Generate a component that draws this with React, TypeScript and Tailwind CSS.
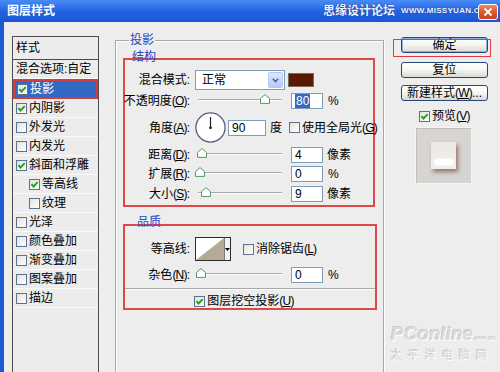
import React from 'react';

// XP 스타일 체크박스
const Check = ({ on = false }: { on?: boolean }) => (
   <span className="flex h-[11px] w-[11px] shrink-0 items-center justify-center border border-[#5d7290] bg-gradient-to-br from-[#e2e2dc] to-white">
      {on && (
         <svg width="9" height="9" viewBox="0 0 9 9">
            <path d="M1.4 4.2 L3.5 6.5 L7.7 2.1" fill="none" stroke="#21a121" strokeWidth="1.9" />
         </svg>
      )}
   </span>
);

const Slider = ({ at }: { at: number }) => (
   <div className="relative ml-[8px] h-[16px] w-[84px] shrink-0">
      <div className="absolute left-0 right-0 top-[6px] h-[2px] border-t border-[#a9a9a9] bg-white" />
      <svg className="absolute top-[1px]" style={{ left: at - 5 }} width="10" height="10" viewBox="0 0 10 10">
         <path d="M0.5 4.5 L5 0.6 L9.5 4.5 L9.5 9.4 L0.5 9.4 Z" fill="#fff" stroke="#4d9a62" />
      </svg>
   </div>
);

const Field = ({ w, children }: { w: string; children: React.ReactNode }) => (
   <div className={`flex h-[16px] shrink-0 items-center border border-[#7f9db9] bg-white pl-[3px] ${w}`}>{children}</div>
);

// 라벨 안의 (O) 같은 단축키 표시
const Key = ({ k }: { k: string }) => (
   <span className="tracking-[-0.8px]">
      (<u>{k}</u>)
   </span>
);

const Label = ({ children }: { children: React.ReactNode }) => (
   <span className="flex w-[65px] shrink-0 justify-end whitespace-nowrap">{children}</span>
);

const Btn = ({ children, main = false }: { children: React.ReactNode; main?: boolean }) => (
   <div
      className={`flex h-[16px] w-[87px] items-center justify-center whitespace-nowrap rounded-[3px] border border-[#24467c] bg-gradient-to-b from-white via-[#f5f5f1] to-[#dadad2] leading-none ${
         main ? 'shadow-[inset_0_0_0_1px_#8fb2e6]' : ''
      }`}
   >
      {children}
   </div>
);

const items: { name: string; on?: boolean; sub?: boolean; sel?: boolean }[] = [
   { name: '投影', on: true, sel: true },
   { name: '内阴影', on: true },
   { name: '外发光' },
   { name: '内发光' },
   { name: '斜面和浮雕', on: true },
   { name: '等高线', on: true, sub: true },
   { name: '纹理', sub: true },
   { name: '光泽' },
   { name: '颜色叠加' },
   { name: '渐变叠加' },
   { name: '图案叠加' },
   { name: '描边' },
];

export default function App() {
   return (
      <div className="relative h-[372px] w-[500px] overflow-hidden bg-[#ededed] font-['Liberation_Sans','Noto_Sans_CJK_SC',sans-serif] text-[12px] leading-[14px] text-black">
         {/* 타이틀바 */}
         <div className="relative flex h-[22px] items-center whitespace-nowrap bg-gradient-to-b from-[#4a8cf4] via-[#2264e2] to-[#1a56d6] pl-[7px]">
            <span className="font-bold text-white">图层样式</span>
            <span className="ml-[268px] font-bold text-[#eef3ff] [text-shadow:0_0_1px_#0b2f94,0_0_1px_#0b2f94]">思缘设计论坛</span>
            <span className="ml-[6px] text-[8px] font-bold tracking-[0.3px] text-[#eef3ff] [text-shadow:0_0_1px_#0b2f94]">WWW.MISSYUAN.COM</span>
            <div className="absolute right-[2px] top-[4px] flex h-[16px] w-[20px] items-center justify-center rounded-[3px] border border-white bg-gradient-to-b from-[#f08a60] via-[#e0552a] to-[#c8401c]">
               <svg width="10" height="10" viewBox="0 0 10 10">
                  <path d="M1.5 1.5 L8.5 8.5 M8.5 1.5 L1.5 8.5" stroke="#fff" strokeWidth="2" />
               </svg>
            </div>
         </div>

         <div className="flex h-[350px] border-l-4 border-[#1d5ad6] pl-[8px] pt-[14px]">
            {/* 스타일 목록 */}
            <div className="h-[340px] w-[87px] shrink-0 whitespace-nowrap border border-[#4f4f4f] bg-[#ececec]">
               <div className="flex h-[23px] items-center border-b border-[#4a4a4a] pl-[3px]">样式</div>
               <div className="flex h-[19px] items-center border-b border-[#fafafa] pl-[3px]">混合选项:自定</div>
               {items.map((it) =>
                  it.sel ? (
                     <div
                        key={it.name}
                        className="flex h-[20px] items-center gap-[2px] border-2 border-[#d23d3d] bg-[#316ac5] pl-[2px] text-white"
                     >
                        <Check on={it.on} />
                        {it.name}
                     </div>
                  ) : (
                     <div
                        key={it.name}
                        className={`flex h-[19px] items-center gap-[2px] border-b border-[#fafafa] ${it.sub ? 'pl-[16px]' : 'pl-[3px]'}`}
                     >
                        <Check on={it.on} />
                        {it.name}
                     </div>
                  )
               )}
            </div>

            {/* 투영 그룹 */}
            <div className="relative ml-[16px] mt-[4px] h-[340px] w-[269px] shrink-0 whitespace-nowrap border border-[#a8a8a8] pl-[7px] pt-[17px] shadow-[inset_1px_1px_0_#fff,1px_1px_0_#fff]">
               <span className="absolute left-[13px] top-[-8px] bg-[#ededed] px-[1px] text-[#1f47c8]">投影</span>

               {/* 구조 */}
               <div className="relative h-[149px] w-[252px] border-2 border-[#e04848] pt-[10px]">
                  <span className="absolute left-[7px] top-[-10px] text-[#1f47c8]">结构</span>

                  <div className="flex h-[20px] items-center">
                     <Label>混合模式:</Label>
                     <div className="ml-[5px] flex h-[20px] w-[90px] items-center border border-[#7f9db9] bg-white pl-[6px]">
                        <span>正常</span>
                        <div className="ml-auto mr-[1px] flex h-[16px] w-[15px] items-center justify-center rounded-[2px] border border-[#b7c8ef] bg-gradient-to-b from-[#dfe8fd] to-[#b6caf6]">
                           <svg width="7" height="5" viewBox="0 0 7 5">
                              <path d="M0.8 0.8 L3.5 3.6 L6.2 0.8" fill="none" stroke="#4d6185" strokeWidth="1.5" />
                           </svg>
                        </div>
                     </div>
                     <div className="ml-[3px] h-[14px] w-[26px] border border-[#7a6a66] bg-[#5a1a02]" />
                  </div>

                  <div className="mt-[3px] flex h-[16px] items-center">
                     <Label>
                        不透明度<Key k="O" />:
                     </Label>
                     <Slider at={67} />
                     <Field w="ml-[9px] w-[32px]">
                        <span className="bg-[#316ac5] px-[1px] text-white">80</span>
                     </Field>
                     <span className="ml-[5px]">%</span>
                  </div>

                  <div className="mt-[3px] flex h-[31px] items-center">
                     <Label>
                        角度<Key k="A" />:
                     </Label>
                     <svg className="ml-[5px] shrink-0" width="31" height="31" viewBox="0 0 31 31">
                        <circle cx="15.5" cy="15.5" r="14.6" fill="#fff" stroke="#55607a" strokeWidth="1.3" />
                        <line x1="15.5" y1="15.5" x2="15.5" y2="5" stroke="#222" strokeWidth="1.2" />
                        <circle cx="15.5" cy="15.8" r="1.4" fill="#222" />
                     </svg>
                     <Field w="ml-[2px] w-[38px]">90</Field>
                     <span className="ml-[4px]">度</span>
                     <span className="ml-[7px]">
                        <Check />
                     </span>
                     <span className="ml-[2px]">
                        使用全局光<Key k="G" />
                     </span>
                  </div>

                  <div className="mt-[4px] flex h-[16px] items-center">
                     <Label>
                        距离<Key k="D" />:
                     </Label>
                     <Slider at={4} />
                     <Field w="ml-[9px] w-[32px]">4</Field>
                     <span className="ml-[4px]">像素</span>
                  </div>

                  <div className="mt-[3px] flex h-[16px] items-center">
                     <Label>
                        扩展<Key k="R" />:
                     </Label>
                     <Slider at={2} />
                     <Field w="ml-[9px] w-[32px]">0</Field>
                     <span className="ml-[5px]">%</span>
                  </div>

                  <div className="mt-[4px] flex h-[16px] items-center">
                     <Label>
                        大小<Key k="S" />:
                     </Label>
                     <Slider at={8} />
                     <Field w="ml-[9px] w-[32px]">9</Field>
                     <span className="ml-[4px]">像素</span>
                  </div>
               </div>

               {/* 품질 */}
               <div className="relative mt-[17px] h-[86px] w-[254px] border-2 border-[#e04848] pt-[11px]">
                  <span className="absolute left-[12px] top-[-11px] text-[#1f47c8]">品质</span>

                  <div className="flex h-[24px] items-center">
                     <Label>等高线:</Label>
                     <div className="ml-[5px] flex h-[24px] w-[36px] shrink-0 border border-[#2c2c2c] bg-white">
                        <svg width="28" height="22" viewBox="0 0 28 22">
                           <polygon points="0,22 28,0 28,22" fill="#b4aa97" />
                        </svg>
                        <div className="flex flex-1 items-center justify-center border-l border-[#7a7a7a] bg-[#f2f2f2]">
                           <svg width="5" height="3" viewBox="0 0 5 3">
                              <polygon points="0,0 5,0 2.5,3" fill="#000" />
                           </svg>
                        </div>
                     </div>
                     <span className="ml-[12px]">
                        <Check />
                     </span>
                     <span className="ml-[2px]">
                        消除锯齿<Key k="L" />
                     </span>
                  </div>

                  <div className="mt-[6px] flex h-[16px] items-center">
                     <Label>
                        杂色<Key k="N" />:
                     </Label>
                     <Slider at={3} />
                     <Field w="ml-[9px] w-[32px]">0</Field>
                     <span className="ml-[5px]">%</span>
                  </div>

                  <div className="mt-[5px] h-[2px] border-t border-[#a9a9a9] bg-white" />

                  <div className="mt-[4px] flex h-[14px] items-center justify-center gap-[2px] pr-[12px]">
                     <Check on />
                     <span>
                        图层挖空投影<Key k="U" />
                     </span>
                  </div>
               </div>
            </div>

            {/* 오른쪽 버튼 */}
            <div className="relative ml-[17px] mt-[1px] w-[87px] shrink-0 whitespace-nowrap">
               <Btn main>确定</Btn>
               <div className="absolute left-[-8px] top-[2px] h-[18px] w-[98px] border border-[#e03c3c]" />
               <div className="mt-[9px]">
                  <Btn>复位</Btn>
               </div>
               <div className="mt-[7px]">
                  <Btn>
                     新建样式<Key k="W" />...
                  </Btn>
               </div>
               <div className="ml-[18px] mt-[8px] flex h-[14px] items-center gap-[2px]">
                  <Check on />
                  <span>
                     预览<Key k="V" />
                  </span>
               </div>
               <div className="ml-[14px] mt-[4px] flex h-[57px] w-[57px] items-start justify-center border border-[#f4f4f4] bg-[#d7d4d1] pt-[14px] shadow-[inset_1px_1px_0_#c2bfbb]">
                  <div className="flex h-[27px] w-[25px] items-end justify-center bg-gradient-to-b from-[#ebe8e5] to-[#f1efed] pb-[4px] shadow-[2px_3px_4px_rgba(95,45,25,0.55)]">
                     <div className="h-[6px] w-[19px] rounded-[3px] bg-white shadow-[0_0_3px_#fff]" />
                  </div>
               </div>
            </div>
         </div>

         {/* 워터마크 */}
         <div className="absolute left-[391px] top-[324px] flex flex-col items-start whitespace-nowrap text-[#dcdcdc] [text-shadow:1px_1px_0_#fff,-1px_-1px_0_#c9c9c9]">
            <span className="text-[19px] font-bold italic leading-[20px]">
               PConline<span className="text-[6px] not-italic">.com.cn</span>
            </span>
            <span className="text-[11px] leading-[14px] tracking-[6px]">太平洋电脑网</span>
         </div>
      </div>
   );
}
